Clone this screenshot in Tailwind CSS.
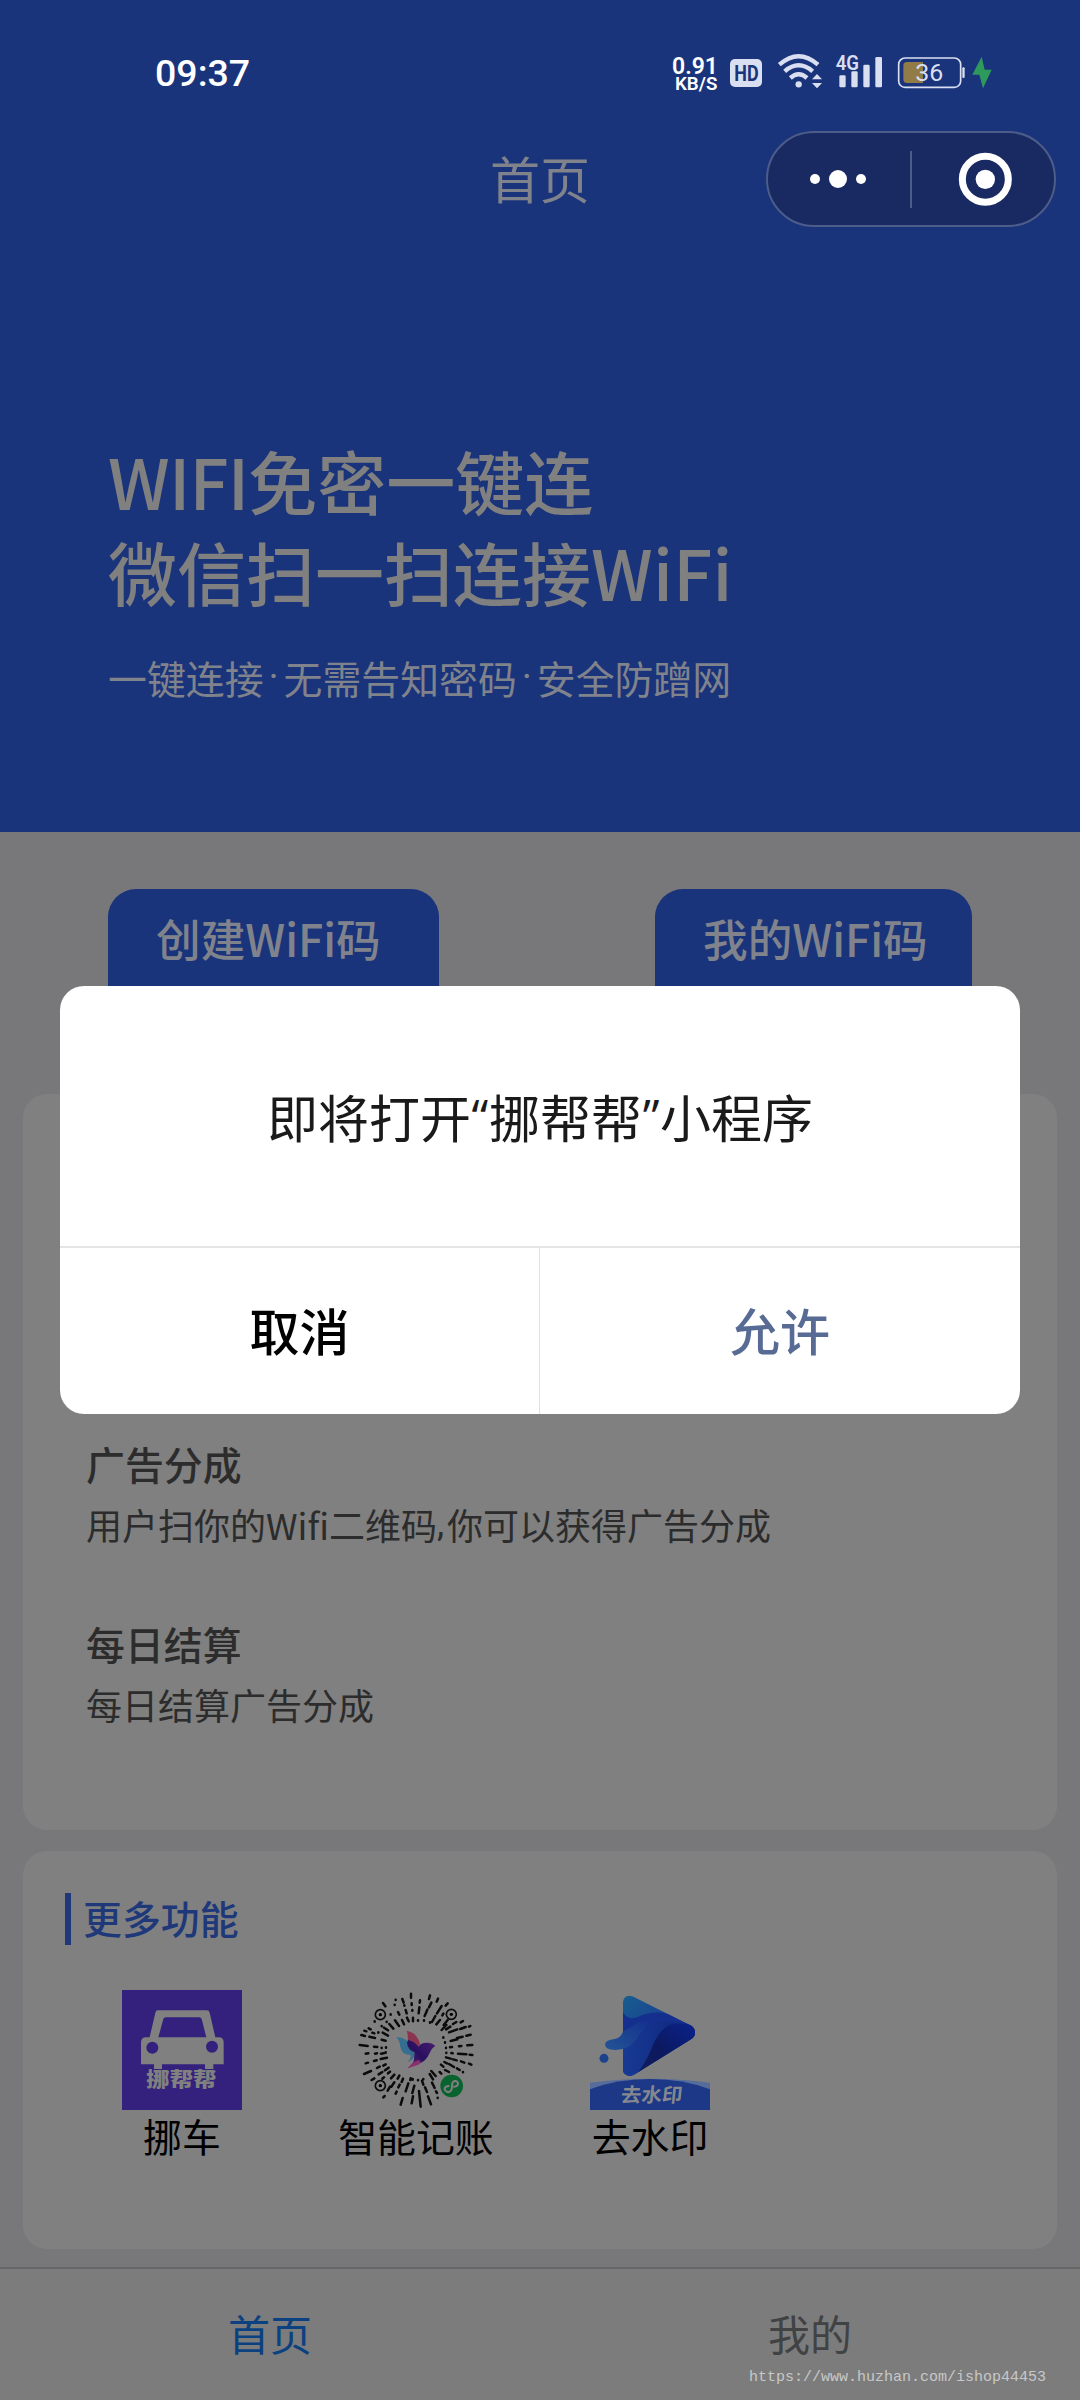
<!DOCTYPE html>
<html lang="zh-CN">
<head>
<meta charset="utf-8">
<title>首页</title>
<script src="https://cdn.jsdelivr.net/npm/@tailwindcss/browser@4"></script>
</head>
<body class="bg-[#78787a]">
<div class="relative flex h-[2400px] w-[1080px] flex-col overflow-hidden bg-[#78787a] font-['Noto_Sans_CJK_SC',sans-serif]">

  <!-- hero -->
  <header class="flex h-[832px] shrink-0 flex-col bg-[#1a347b]">
    <div class="flex h-[131px] items-start justify-between pt-[50px] pr-[83px] pl-[155px]">
      <div class="pt-px font-['Roboto',sans-serif] text-[37.500px] leading-[45px] font-medium text-white">09:37</div>
      <svg class="h-[45px] w-[327px]" viewBox="90 60 981 135">
        <g fill="#fff" font-family="Roboto, sans-serif" font-weight="600">
          <text x="96" y="131" font-size="74" textLength="138" lengthAdjust="spacingAndGlyphs">0.91</text>
          <text x="105" y="181" font-size="55" textLength="127" lengthAdjust="spacingAndGlyphs">KB/S</text>
        </g>
        <rect x="270" y="87" width="96" height="84" rx="15" fill="#d9dff1"/>
        <text x="283" y="153" font-family="Roboto, sans-serif" font-weight="700" font-size="66" textLength="73" lengthAdjust="spacingAndGlyphs" fill="#1a347b">HD</text>
        <g fill="none" stroke="#d9dff1" stroke-width="13">
          <path d="M418 104Q476 53 534 104"/>
          <path d="M434 124Q476 88 518 124"/>
          <path d="M451 144Q476 122 501 144"/>
        </g>
        <g fill="#d9dff1">
          <circle cx="476" cy="163" r="9.500"/>
          <path d="M531 132L546 148H516ZM531 175L546 159H516Z"/>
          <rect x="598" y="136" width="19" height="36" rx="4"/>
          <rect x="634" y="124" width="19" height="48" rx="4"/>
          <rect x="670" y="104" width="19" height="68" rx="4"/>
          <rect x="706" y="81" width="20" height="91" rx="4"/>
          <text x="587" y="121" font-family="Roboto, sans-serif" font-weight="600" font-size="62" textLength="70" lengthAdjust="spacingAndGlyphs" stroke="#1a347b" stroke-width="5" paint-order="stroke">4G</text>
          <rect x="967" y="112" width="7" height="32" rx="3"/>
        </g>
        <rect x="776" y="84" width="186" height="88" rx="19" fill="none" stroke="#d9dff1" stroke-width="5"/>
        <path d="M801 96H849V159H801Q790 159 790 148V107Q790 96 801 96Z" fill="#917c48"/>
        <text x="826" y="153" font-family="Roboto, sans-serif" font-size="72" font-weight="400" textLength="84" lengthAdjust="spacingAndGlyphs" fill="#d9dff1">36</text>
        <path d="M1025 80L997 134H1018L1029 175L1055 119H1034Z" fill="#2d9a5b"/>
      </svg>
    </div>
    <div class="flex h-24 items-center px-6">
      <div class="w-[290px]"></div>
      <h1 class="flex-1 pb-[3px] text-center text-[50px] leading-[93px] text-[#80838c]">首页</h1>
      <div class="flex h-24 w-[290px] rounded-full border-2 border-[#4d5c89] bg-[#182a61]">
        <svg class="h-full w-full" viewBox="384 309 858 276">
          <g fill="#fff"><circle cx="525" cy="447" r="15"/><circle cx="594" cy="447" r="27"/><circle cx="663" cy="447" r="15"/><circle cx="1036" cy="448" r="29"/></g>
          <rect x="810" y="363" width="6" height="171" fill="#4d5c89"/>
          <circle cx="1036" cy="448" r="69" fill="none" stroke="#fff" stroke-width="21"/>
        </svg>
      </div>
    </div>
    <div class="px-[108px] pt-[208px] text-[#808080]">
      <div class="text-[69px] leading-[91px] font-medium whitespace-nowrap"><span class="tracking-[-0.8px]">WIFI</span>免密一键连<br>微信扫一扫连接<span class="tracking-[0.3px]">WiFi</span></div>
      <div class="mt-[34px] flex text-[38.880px] leading-[52px] whitespace-nowrap text-[#80838c]">一键连接<span class="w-5 text-center font-['Roboto',sans-serif]">·</span>无需告知密码<span class="w-5 text-center font-['Roboto',sans-serif]">·</span>安全防蹭网</div>
    </div>
  </header>

  <!-- actions -->
  <div class="flex h-[262px] shrink-0 justify-between px-[108px] pt-[57px] text-[44.640px] leading-[64px] font-medium text-[#80838c]">
    <div class="h-[150px] w-[331px] rounded-[28px] bg-[#1a347b] pt-[17px] pl-[48px] whitespace-nowrap">创建WiFi码</div>
    <div class="h-[150px] w-[317px] rounded-[28px] bg-[#1a347b] pt-[17px] pl-[48px] whitespace-nowrap">我的WiFi码</div>
  </div>

  <!-- earnings info -->
  <section class="mx-[23px] flex h-[736px] shrink-0 flex-col gap-[61px] rounded-3xl bg-[#808080] pt-[339px] pl-[63px] text-[#2c2c2c]">
    <div>
      <h2 class="text-[38.880px] leading-[60px] font-medium">广告分成</h2>
      <p class="mt-[3px] flex text-[36px] leading-[56px] whitespace-nowrap"><span>用户扫你的Wifi二维码</span><span class="w-[10px] font-['Roboto',sans-serif]">,</span><span>你可以获得广告分成</span></p>
    </div>
    <div>
      <h2 class="text-[38.880px] leading-[60px] font-medium">每日结算</h2>
      <p class="mt-[3px] text-[36px] leading-[56px]">每日结算广告分成</p>
    </div>
  </section>

  <!-- more features -->
  <section class="mx-[23px] mt-[21px] h-[398px] shrink-0 rounded-3xl bg-[#808080] pt-[42px] pl-[42px]">
    <div class="flex h-[52px] items-center gap-[12px]">
      <div class="h-[52px] w-[6px] bg-[#1f3879]"></div>
      <h2 class="pb-[3px] text-[38.880px] leading-[49px] font-medium text-[#1f3879]">更多功能</h2>
    </div>
    <div class="flex pt-[45px] text-[38.880px] leading-[54px] text-black">
      <div class="flex w-[234px] flex-col items-center">
        <svg class="h-[120px] w-[120px]" viewBox="66 60 360 360">
          <rect x="66" y="60" width="360" height="360" fill="#33217d"/>
          <path fill="#808080" fill-rule="evenodd" d="M174 121H320Q327 121 329 128L346 202H356Q371 202 371 218V283H340V297H315V283H186V297H162V283H123V218Q123 202 138 202H149L166 128Q168 121 174 121ZM197 142Q192 142 190 147L175 202H319L305 147Q303 142 298 142Z"/>
          <circle cx="157" cy="233" r="18" fill="#33217d"/><circle cx="336" cy="230" r="18" fill="#33217d"/>
          <text x="139" y="352" font-family="Noto Sans CJK SC, sans-serif" font-weight="900" font-size="60" textLength="210" lengthAdjust="spacingAndGlyphs" fill="#808080">挪帮帮</text>
        </svg>
        <div class="mt-[-2px]">挪车</div>
      </div>
      <div class="flex w-[234px] flex-col items-center">
        <svg class="h-[120px] w-[120px]" viewBox="109 60 360 360">
          <defs>
            <linearGradient id="bird" x1="0" y1="1" x2="1" y2="0"><stop offset="0" stop-color="#5f2a72"/><stop offset=".45" stop-color="#28105f"/><stop offset="1" stop-color="#4a1d70"/></linearGradient>
          </defs>
          <g stroke="#0b0b0b" stroke-width="7.500" stroke-linecap="round" fill="none">
            <path d="M274 71V83M276 100V105M278 120V122M280 143V154M331 76L328 87M301 91L300 98M299 112L297 130M355 86L351 95M335 98L328 112M323 119L315 138M313 151V152M384 100L378 107M366 108L352 130M347 138L337 156M361 150L350 163M331 157V158M295 151V152M371 131L368 136M384 150L372 165M380 165L366 180M430 153L423 157M410 156L400 162M392 170L379 178M438 171L422 177M413 178L388 187M452 168L448 170M453 194L440 197M429 200L412 204M413 208L393 213M458 225L443 226M425 228L418 229M397 231L391 232M371 202V203M376 217V218M379 233V234M380 248V249M458 255L450 254M440 253L415 251M399 250L395 249M455 284L448 281M434 278L424 274M411 271L400 268M393 266L379 262M430 306V307M420 300L412 295M403 291L388 282M382 280L374 276M371 290L364 284M388 306L376 300M365 311L360 306M354 383V384M352 369L349 364M345 354L337 338M348 318L335 303M340 328L330 312M334 403L325 379M322 366L316 352M311 344L307 332M303 410L298 363M311 327V328M295 330V331M276 400L280 379M278 369L284 347M279 327V329M243 404L249 384M258 364L266 340M272 330L273 325M228 371L231 365M236 352L240 344M246 336L250 326M195 378L191 382M211 350L204 362M224 337L215 350M234 326L239 317M188 326L193 322M205 310L211 305M214 325L224 314M156 330L164 325M177 313L188 306M196 301L207 293M133 312L154 303M172 294L180 290M191 287L198 283M138 280L145 278M163 273L171 271M183 267L202 263M138 251L146 250M166 251L172 250M184 251L192 250M120 225L144 228M163 230L173 231M186 233V234M199 232V233M198 247V248M125 195L136 198M149 200L166 204M186 209L198 212M134 182L140 184M158 188L164 190M176 187V188M189 188L205 197M147 175L153 178M193 173L205 181M165 154V155M201 155V156M186 168V169M209 162L221 176M190 99L197 109M228 89V90M248 87L252 98M225 104V105M235 126L239 134M258 120L261 130M254 106V107M213 133V134M226 151L238 168M247 150L253 163M262 143L267 154"/>
          </g>
          <g fill="none" stroke="#0b0b0b" stroke-width="5"><circle cx="182" cy="134" r="15"/><circle cx="395" cy="133" r="15"/><circle cx="182" cy="347" r="15"/></g>
          <circle cx="182" cy="134" r="5"/><circle cx="395" cy="133" r="5"/><circle cx="182" cy="347" r="5"/>
          <path d="M230 202Q255 202 266 216L285 247Q289 265 262 278Q277 262 272 254Q246 255 242 230Q240 212 230 202Z" fill="#346e91"/>
          <path d="M261 182Q291 187 301 221L285 247Q263 236 264 215Q266 196 261 182Z" fill="#8b344f"/>
          <path d="M285 247Q264 240 262 218L266 210Q285 214 296 230Q305 217 322 218Q336 217 347 227Q334 236 330 249Q319 275 296 282Q276 287 264 295Q279 283 282 274Z" fill="url(#bird)"/>
          <path d="M264 295Q276 278 296 270Q309 275 296 284Z" fill="#8b2f70"/>
          <circle cx="396" cy="348" r="34" fill="#08632f"/>
          <path d="M387 348Q371 350 376 360Q386 373 395 360Q397 356 397 347Q397 332 408 333Q419 337 413 346Q410 350 403 350" fill="none" stroke="#808080" stroke-width="6" stroke-linecap="round"/>
        </svg>
        <div class="mt-[-2px]">智能记账</div>
      </div>
      <div class="flex w-[234px] flex-col items-center">
        <svg class="h-[120px] w-[120px]" viewBox="90 60 360 360">
          <defs>
            <linearGradient id="pa" x1="0" y1="0" x2="1" y2="1"><stop offset="0" stop-color="#165f8f"/><stop offset=".5" stop-color="#1c3e91"/></linearGradient>
            <linearGradient id="pb" x1="0" y1="0" x2="1" y2="0"><stop offset="0" stop-color="#183a92"/><stop offset="1" stop-color="#0c237c"/></linearGradient>
            <linearGradient id="pc" x1="0" y1="1" x2="1" y2="0"><stop offset="0" stop-color="#111d5b"/><stop offset=".45" stop-color="#0c195f"/><stop offset="1" stop-color="#0a228c"/></linearGradient>
            <linearGradient id="pd" x1="0" y1="1" x2="1" y2="0"><stop offset="0" stop-color="#235595"/><stop offset="1" stop-color="#142f8e"/></linearGradient>
            <clipPath id="tri"><path d="M189 96Q191 78 208 77Q216 77 223 82L395 168Q405 176 405 188Q405 199 395 206L224 313Q215 318 207 317Q190 314 189 300Z"/></clipPath>
          </defs>
          <g clip-path="url(#tri)">
            <rect x="185" y="70" width="225" height="250" fill="url(#pa)"/>
            <path d="M189 127Q202 151 231 142Q278 119 330 133L410 170V320H189Z" fill="#142f8e"/>
            <path d="M189 236Q220 228 239 198Q271 146 330 155L410 165V320H189Z" fill="url(#pb)"/>
            <path d="M222 320Q254 286 273 239Q306 153 360 162L410 166V320Z" fill="url(#pc)"/>
            <path d="M189 320V300Q203 321 231 302L214 322Z" fill="#193b9b"/>
          </g>
          <path d="M189 184Q184 204 160 208Q136 211 135 224Q136 238 163 240Q205 242 230 208Q250 176 275 155Q240 147 216 170Q199 178 189 184Z" fill="url(#pd)"/>
          <circle cx="132" cy="265" r="13.500" fill="#1c428e"/>
          <path d="M90 338Q270 315 450 338V370H90Z" fill="#566c9b"/>
          <path d="M90 358Q170 327 270 327Q370 327 450 358V420H90Z" fill="#1c3887"/>
          <text transform="translate(181 396) skewX(-6)" font-family="Noto Sans CJK SC, sans-serif" font-weight="700" font-size="59" textLength="184" lengthAdjust="spacingAndGlyphs" fill="#85888e">去水印</text>
        </svg>
        <div class="mt-[-2px]">去水印</div>
      </div>
    </div>
  </section>

  <!-- tab bar -->
  <nav class="mt-[18px] grid h-[133px] shrink-0 grid-cols-2 border-t-2 border-[#666667] bg-[#7c7c7c] text-center text-[42px] leading-[128px]">
    <div class="text-[#0b4180]">首页</div>
    <div class="text-[#414244]">我的</div>
  </nav>

  <!-- watermark -->
  <div class="absolute top-[2367px] left-[749px] font-['Liberation_Mono',monospace] text-[15px] leading-[22px] text-[#c8c8c8]">https://www.huzhan.com/ishop44453</div>

  <!-- dialog -->
  <div class="absolute top-[986px] left-[60px] flex h-[428px] w-[960px] flex-col overflow-hidden rounded-3xl bg-white">
    <div class="flex h-[260px] items-center justify-center text-[51px] leading-[64px] whitespace-nowrap text-[#1a1a1a]">即将打开<span class="w-[18px] text-center font-['Open_Sans',sans-serif] text-[48px]">“</span>挪帮帮<span class="w-[18px] text-center font-['Open_Sans',sans-serif] text-[48px]">”</span>小程序</div>
    <div class="grid flex-1 grid-cols-2 border-t-2 border-[#e5e5e5] text-center text-[50px] leading-[162px] font-medium">
      <div class="border-r border-[#e0e0e0] text-black">取消</div>
      <div class="text-[#576b95]">允许</div>
    </div>
  </div>
</div>
</body>
</html>
